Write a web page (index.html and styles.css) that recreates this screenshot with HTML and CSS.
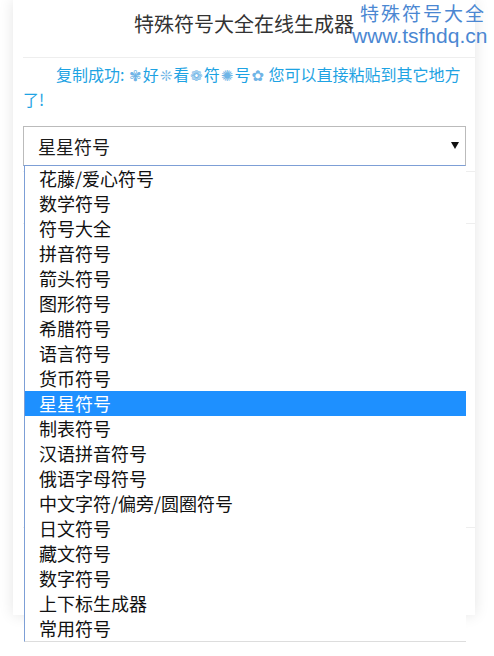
FILE: index.html
```html
<!DOCTYPE html>
<html lang="zh-CN">
<head>
<meta charset="utf-8">
<title>特殊符号大全在线生成器</title>
<link rel="stylesheet" href="styles.css">
</head>
<body>
<div class="watermark">
  <div class="wm-cn">特殊符号大全</div>
  <div class="wm-url">www.tsfhdq.cn</div>
</div>
<div class="card">
  <header class="head"><h1 class="title">特殊符号大全在线生成器</h1></header>
  <p class="msg">复制成功: <span class="sym">✾</span>好<span class="sym">❊</span>看<span class="sym">❁</span>符<span class="sym">✺</span>号<span class="sym">✿</span> 您可以直接粘贴到其它地方了!</p>
  <div class="select-wrap">
    <div class="select">
      <span class="select-val">星星符号</span>
      <svg class="arrow" width="8" height="7" viewBox="0 0 8 7"><polygon points="0,0 8,0 4,7" fill="#111"/></svg>
    </div>
    <ul class="options">
      <li>花藤/爱心符号</li>
      <li>数学符号</li>
      <li>符号大全</li>
      <li>拼音符号</li>
      <li>箭头符号</li>
      <li>图形符号</li>
      <li>希腊符号</li>
      <li>语言符号</li>
      <li>货币符号</li>
      <li class="sel">星星符号</li>
      <li>制表符号</li>
      <li>汉语拼音符号</li>
      <li>俄语字母符号</li>
      <li>中文字符/偏旁/圆圈符号</li>
      <li>日文符号</li>
      <li>藏文符号</li>
      <li>数字符号</li>
      <li>上下标生成器</li>
      <li>常用符号</li>
    </ul>
  </div>
  <div class="sec sec1"></div>
  <div class="sec sec2"></div>
  <div class="sec sec3">
    <div class="btn-row"><span class="btn"></span></div>
  </div>
</div>
</body>
</html>
```

FILE: styles.css
```css
html, body {
  margin: 0;
  padding: 0;
  background: #fff;
}
body {
  min-height: 100vh;
  font-family: "Noto Sans CJK SC", "DejaVu Sans", sans-serif;
  color: #333;
}
.card {
  margin-left: 13px;
  width: 462px;
  background: #fff;
  box-shadow: 0 0 14px rgba(0, 0, 0, 0.11);
  padding-bottom: 24px;
}
.head {
  height: 57px;
  margin-left: 10px;
  border-bottom: 1px solid #eee;
  box-sizing: content-box;
}
.title {
  margin: 0;
  padding-top: 10px;
  padding-right: 10px;
  font-size: 20px;
  line-height: 28px;
  font-weight: normal;
  text-align: center;
  color: #333;
}
.msg {
  margin: 5px 9px 0 10px;
  font-size: 16px;
  line-height: 23px;
  text-indent: 33px;
  color: #1ea3e3;
}
.sym {
  color: #6fb4e6;
  font-family: "DejaVu Sans", sans-serif;
  font-size: 15px;
  padding: 0 1px;
}
.select-wrap {
  position: relative;
  margin: 15px 9px 0 10px;
}
.select {
  height: 40px;
  box-sizing: border-box;
  border: 1px solid #bbb;
  border-bottom-color: #7d9fd6;
  display: flex;
  align-items: center;
  justify-content: space-between;
  padding: 0 6px 0 14px;
}
.select-val {
  font-size: 18px;
  color: #1a1a1a;
  line-height: 24px;
}
.arrow {
  margin-top: -2px;
}
.options {
  position: absolute;
  top: 40px;
  left: 1px;
  right: 0;
  margin: 0;
  padding: 0;
  list-style: none;
  background: #fff;
  border-left: 1px solid #7d9fd6;
  border-bottom: 1px solid #ddd;
  z-index: 5;
}
.options li {
  height: 25px;
  line-height: 25px;
  font-size: 18px;
  color: #111;
  padding-left: 14px;
}
.options li.sel {
  background: #1e90ff;
  color: #fff;
}
.sec {
  margin-left: 10px;
  border-top: 1px solid #eee;
}
.sec1 {
  margin-top: 5px;
  height: 51px;
}
.sec2 {
  height: 303px;
}
.sec3 {
  padding-top: 25px;
}
.btn-row {
  display: flex;
  justify-content: flex-end;
  padding-right: 9px;
}
.btn {
  display: block;
  width: 120px;
  height: 38px;
  border-right: 2px solid #1a8ee0;
}
.watermark {
  position: absolute;
  top: 0;
  left: 350px;
  width: 140px;
  padding-top: 1px;
  z-index: 10;
}
.wm-cn {
  font-family: "Noto Sans CJK SC", sans-serif;
  font-size: 19px;
  line-height: 24px;
  letter-spacing: 2px;
  color: #4b87d2;
  padding-left: 10px;
}
.wm-url {
  font-family: "Liberation Sans", Arial, sans-serif;
  font-size: 21px;
  line-height: 22px;
  color: #4b87d2;
  padding-left: 2px;
}
```
